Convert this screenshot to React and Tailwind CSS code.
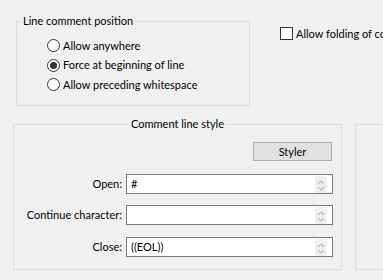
import React from "react";

function Radio({ checked, label, h }) {
  return (
    <div className={`flex items-center ${h}`}>
      <span className="w-[13px] h-[13px] rounded-full border border-[#333333] bg-white flex items-center justify-center shrink-0">
        {checked && <span className="w-[7px] h-[7px] rounded-full bg-[#333333]" />}
      </span>
      <span className="ml-[3px] leading-[16px]">{label}</span>
    </div>
  );
}

function Spin() {
  return (
    <div className="absolute right-[5px] top-[1px] bottom-[0px] w-[12px] bg-[#f0f0f0] flex flex-col items-center justify-center">
      <svg width="12" height="16" viewBox="0 0 12 16">
        <path d="M3 7 L6 4 L9 7" fill="none" stroke="#c2c2c2" strokeWidth="1.5" />
        <path d="M3 10 L6 13 L9 10" fill="none" stroke="#c2c2c2" strokeWidth="1.5" />
      </svg>
    </div>
  );
}

function Field({ label, value, mt }) {
  return (
    <div className={`flex items-center ${mt}`}>
      <div className="w-[108px] text-right pr-[0px] leading-[16px]">{label}</div>
      <div className="ml-[4px] w-[207px] h-[20px] border border-[#7a7a7a] bg-white relative flex items-center pl-[4px] leading-[16px]">
        {value}
        <Spin />
      </div>
    </div>
  );
}

export default function App() {
  return (
    <div className="w-[383px] h-[280px] bg-[#f0f0f0] overflow-hidden whitespace-nowrap text-black text-[11px] font-['Lato',sans-serif] flex flex-col">
      <div className="flex mt-[21px]">
        <div className="ml-[16px] w-[234px] h-[85px] border border-[#dcdcdc] relative shrink-0">
          <span className="absolute left-[4px] top-[-9px] px-[2px] bg-[#f0f0f0] leading-[16px]">
            Line comment position
          </span>
          <div className="pt-[14px] pl-[30px] flex flex-col">
            <Radio label="Allow anywhere" h="h-[19px]" />
            <Radio label="Force at beginning of line" checked h="h-[20px]" />
            <Radio label="Allow preceding whitespace" h="h-[19px]" />
          </div>
        </div>
        <div className="ml-[30px] mt-[6px] flex items-center h-[13px] shrink-0">
          <span className="w-[13px] h-[13px] border border-[#333333] bg-white shrink-0" />
          <span className="ml-[3px] leading-[16px]">Allow folding of comments</span>
        </div>
      </div>
      <div className="flex mt-[18px]">
        <div className="ml-[13px] w-[329px] h-[146px] border border-[#dcdcdc] relative shrink-0">
          <div className="absolute left-0 right-0 top-[-9px] flex justify-center">
            <span className="px-[2px] bg-[#f0f0f0] leading-[16px]">Comment line style</span>
          </div>
          <div className="pt-[17px] flex flex-col">
            <div className="flex justify-end pr-[9px]">
              <div className="w-[79px] h-[19px] border border-[#adadad] bg-[#e1e1e1] flex items-center justify-center leading-[16px]">
                Styler
              </div>
            </div>
            <Field label="Open:" value="#" mt="mt-[13px]" />
            <Field label="Continue character:" value="" mt="mt-[11px]" />
            <Field label="Close:" value="((EOL))" mt="mt-[12px]" />
          </div>
        </div>
        <div className="ml-[13px] w-[60px] h-[146px] border border-[#dcdcdc] shrink-0" />
      </div>
    </div>
  );
}
